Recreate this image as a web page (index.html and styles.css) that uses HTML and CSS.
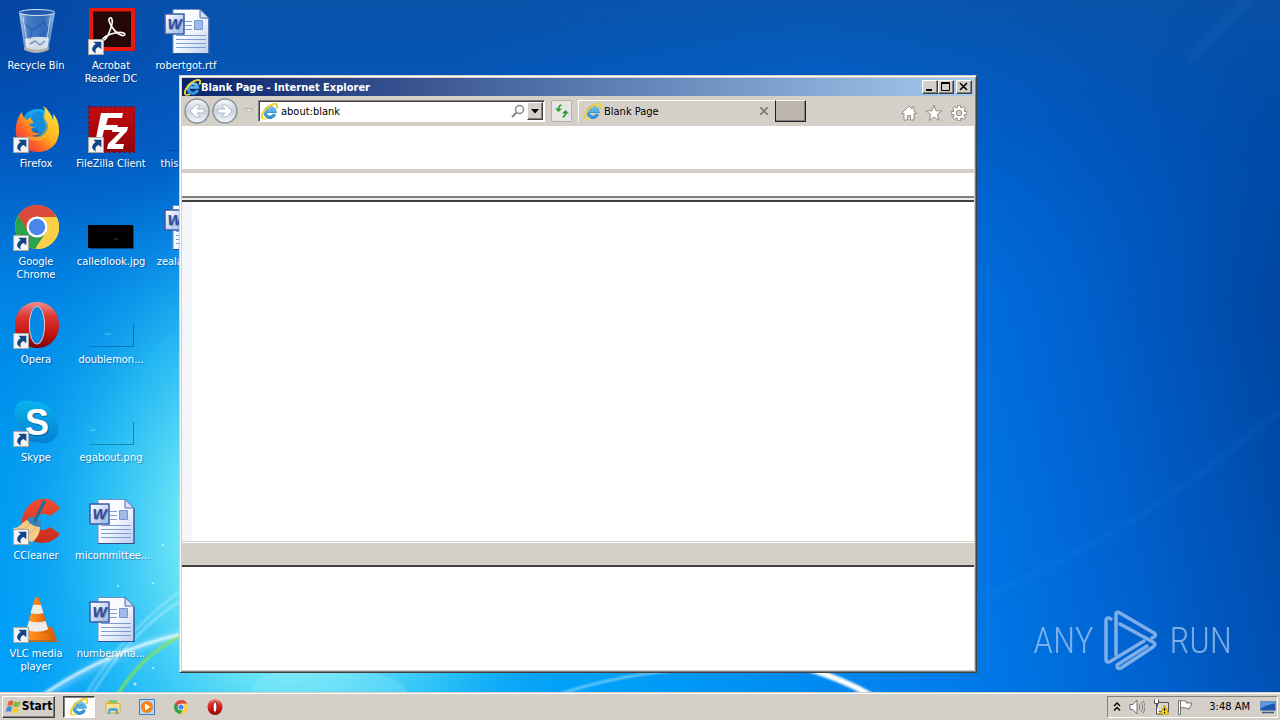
FILE: index.html
```html
<!DOCTYPE html>
<html lang="en">
<head>
<meta charset="utf-8">
<title>Desktop</title>
<link rel="stylesheet" href="styles.css">
</head>
<body>
<svg class="defs" aria-hidden="true">
  <defs>
    <linearGradient id="g-page" x1="0" y1="0" x2="1" y2="1"><stop offset="0" stop-color="#fff"/><stop offset=".5" stop-color="#f6f9ff"/><stop offset="1" stop-color="#b9cdf0"/></linearGradient>
    <linearGradient id="g-badge" x1="0" y1="0" x2="1" y2="1"><stop offset="0" stop-color="#fff"/><stop offset="1" stop-color="#9cb6e6"/></linearGradient>
    <linearGradient id="g-opera" x1="0" y1="0" x2="0" y2="1"><stop offset="0" stop-color="#f3908c"/><stop offset=".3" stop-color="#dd3a34"/><stop offset=".7" stop-color="#c4120f"/><stop offset="1" stop-color="#7c0605"/></linearGradient>
    <linearGradient id="g-fox" x1="1" y1="0" x2="0" y2="1"><stop offset="0" stop-color="#fff04a"/><stop offset=".45" stop-color="#ffb01c"/><stop offset=".7" stop-color="#ff5a2a"/><stop offset="1" stop-color="#f0205a"/></linearGradient>
    <linearGradient id="g-globe" x1="0" y1="0" x2="0" y2="1"><stop offset="0" stop-color="#12b4f4"/><stop offset="1" stop-color="#1450a8"/></linearGradient>
    <linearGradient id="g-fz" x1="0" y1="0" x2="0" y2="1"><stop offset="0" stop-color="#c40c10"/><stop offset="1" stop-color="#920408"/></linearGradient>
    <linearGradient id="g-skype" x1="0" y1="0" x2="0" y2="1"><stop offset="0" stop-color="#08b4f0"/><stop offset="1" stop-color="#067ed0"/></linearGradient>
    <linearGradient id="g-cc" x1="0" y1="0" x2="0" y2="1"><stop offset="0" stop-color="#f04c34"/><stop offset="1" stop-color="#c82c1c"/></linearGradient>
    <linearGradient id="g-bin" x1="0" y1="0" x2="1" y2="0"><stop offset="0" stop-color="#d8e8f8" stop-opacity=".85"/><stop offset=".25" stop-color="#7fa6dc" stop-opacity=".55"/><stop offset=".7" stop-color="#5a8cd0" stop-opacity=".5"/><stop offset="1" stop-color="#c4daf0" stop-opacity=".8"/></linearGradient>
    <linearGradient id="g-cone" x1="0" y1="0" x2="1" y2="0"><stop offset="0" stop-color="#ffa030"/><stop offset=".5" stop-color="#fb8010"/><stop offset="1" stop-color="#d05a04"/></linearGradient>
    <linearGradient id="g-nav" x1="0" y1="0" x2="0" y2="1"><stop offset="0" stop-color="#f8fafc"/><stop offset=".5" stop-color="#c8d0da"/><stop offset="1" stop-color="#f4fcff"/></linearGradient>
    <linearGradient id="g-e" x1="0" y1="0" x2="0" y2="1"><stop offset="0" stop-color="#6cc8f4"/><stop offset="1" stop-color="#2c94d8"/></linearGradient>

    <symbol id="link-arrow" viewBox="0 0 15 15"><path d="M.5.5h14v14H.5z" fill="#f4f4f2" stroke="#a8a8a4"/><path d="M5 2.500h7.500v7L10 7.500C7 8.500 6.500 10.500 7.500 13.500 3 11.500 2.500 8 7.200 4.700z" fill="#124488"/></symbol>

    <symbol id="ie" viewBox="0 0 16 16">
      <path d="M12.800 10.500A4.600 4.600 0 1 1 13 7.900H5" fill="none" stroke="#2a7cbc" stroke-width="3"/>
      <path d="M12.800 10.500A4.600 4.600 0 1 1 13 7.900H5" fill="none" stroke="url(#g-e)" stroke-width="2.200"/>
      <path d="M1.600 14.800C-.6 12.600 2.600 6.600 7 3.500 10.500 1 14 .2 15 1.600c.6 1 .2 2.300-.5 3.600" fill="none" stroke="#d0a41c" stroke-width="1.700"/>
      <path d="M1.600 14.800C-.6 12.600 2.600 6.600 7 3.500 10.500 1 14 .2 15 1.600c.6 1 .2 2.300-.5 3.600M1.600 14.800c1 .7 2.800 0 4.200-.8" fill="none" stroke="#f8dc3c" stroke-width="1.300"/>
    </symbol>

    <symbol id="word" viewBox="0 0 48 48">
      <path d="M11 1.500h27l9 8.500v35.500H11z" fill="url(#g-page)" stroke="#6f8fc8"/>
      <path d="M47 10.500V45.500H11" fill="none" stroke="#2d4f90" stroke-width="1.200"/>
      <path d="M38 1.500V10h9z" fill="#d6e2f8" stroke="#4a6cac"/>
      <path d="M23 13.500h7M23 17.500h7M23 21.500h7M14 27.500h30M14 31.500h30M14 35.500h30M14 39.500h30" stroke="#7f9cd2"/>
      <path d="M32.500 12.500h8v9h-8z" fill="#9db9ea" stroke="#7896d0"/>
      <path d="M3 6h19v20H3z" fill="url(#g-badge)" stroke="#3a5aa8" stroke-width="1.500"/>
      <text x="12.500" y="21" text-anchor="middle" class="glyph-w">W</text>
    </symbol>

    <symbol id="chrome" viewBox="0 0 44 44">
      <circle cx="22" cy="22" r="22" fill="#fbd04b"/>
      <path d="M22 22 3 11A22 22 0 0 0 20 43.900L31 27z" fill="#2ba24c"/>
      <path d="M22 12h19.600A22 22 0 0 0 3.200 10.500L13 27z" fill="#dc4a3c"/>
      <path d="M31.500 27 21 44A22 22 0 0 0 41.700 12H22z" fill="#fbcf48"/>
      <circle cx="22" cy="22" r="10.500" fill="#fff"/><circle cx="22" cy="22" r="8.200" fill="#4a86ec"/>
    </symbol>

    <symbol id="opera" viewBox="0 0 44 46">
      <path fill-rule="evenodd" d="M22 0C35 0 44 10 44 23S35 46 22 46 0 36 0 23 9 0 22 0zM22 4.500c-5.500 0-7.500 7-7.500 18.500S16.500 42 22 42s7.500-7.500 7.500-19S27.500 4.500 22 4.500z" fill="url(#g-opera)"/>
      <ellipse cx="22" cy="23.200" rx="7.600" ry="19" fill="none" stroke="#f4c4bc"/>
    </symbol>
  </defs>
</svg>

<main class="desktop">
  <svg class="wallpaper" viewBox="0 0 1280 692" preserveAspectRatio="none" aria-hidden="true">
    <defs>
      <linearGradient id="w-base" x1="0" y1="0" x2="0" y2="1"><stop offset="0" stop-color="#0550b6"/><stop offset=".15" stop-color="#0460ca"/><stop offset=".4" stop-color="#0082e2"/><stop offset=".65" stop-color="#0098f0"/><stop offset="1" stop-color="#00a2fa"/></linearGradient>
      <linearGradient id="w-right" gradientUnits="userSpaceOnUse" x1="560" y1="560" x2="1330" y2="400"><stop offset="0" stop-color="#0078ec" stop-opacity="0"/><stop offset=".45" stop-color="#0078ea" stop-opacity=".9"/><stop offset=".7" stop-color="#0062d0"/><stop offset="1" stop-color="#00419a"/></linearGradient>
      <linearGradient id="w-top" x1="0" y1="0" x2="0" y2="1"><stop offset="0" stop-color="#0a52a8" stop-opacity=".9"/><stop offset=".5" stop-color="#0054b8" stop-opacity=".45"/><stop offset="1" stop-color="#0060c8" stop-opacity="0"/></linearGradient>
      <radialGradient id="w-glow" gradientUnits="userSpaceOnUse" cx="0" cy="0" r="1" gradientTransform="translate(290 540) scale(320 400)"><stop offset="0" stop-color="#9cf8f0"/><stop offset=".35" stop-color="#70e8f6" stop-opacity=".95"/><stop offset=".62" stop-color="#34c8f6" stop-opacity=".7"/><stop offset="1" stop-color="#0090f0" stop-opacity="0"/></radialGradient>
      <radialGradient id="w-corner" gradientUnits="userSpaceOnUse" cx="0" cy="0" r="260"><stop offset="0" stop-color="#003a9c" stop-opacity=".6"/><stop offset="1" stop-color="#0050b8" stop-opacity="0"/></radialGradient>
      <filter id="soft"><feGaussianBlur stdDeviation="1"/></filter>
      <filter id="haze"><feGaussianBlur stdDeviation="3"/></filter>
    </defs>
    <path fill="url(#w-base)" d="M0 0h1280v692H0z"/>
    <path fill="url(#w-right)" d="M0 0h1280v692H0z"/>
    <path fill="url(#w-top)" d="M0 0h1280v300H0z"/>
    <path fill="url(#w-corner)" d="M0 0h300v300H0z"/>
    <path fill="url(#w-glow)" d="M0 0h1280v692H0z"/>
    <g fill="none" filter="url(#haze)" stroke="#fff">
      <path d="M40 700Q110 650 190 632" stroke-opacity=".4" stroke-width="5"/>
      <path d="M976 600Q1130 540 1280 410" stroke="#3aa0f4" stroke-opacity=".1" stroke-width="6"/>
      <path d="M1190 60 1250 0" stroke="#58b0f0" stroke-opacity=".15" stroke-width="4"/>
    </g>
    <g fill="none" filter="url(#soft)" stroke="#fff">
      <path d="M44 694Q110 650 182 634" stroke-opacity=".85" stroke-width="2.500"/>
      <path d="M86 694Q125 630 182 590M92 694Q132 630 182 600" stroke-opacity=".5" stroke-width="1.500"/>
      <path d="M118 694Q142 655 182 635" stroke="#8ee83c" stroke-width="2.500"/>
      <path d="M560 694Q610 677 670 671" stroke-opacity=".55" stroke-width="2"/>
      <path d="M806 668Q845 680 872 696" stroke-width="6"/>
    </g>
    <path d="M248 692q12-20 38-20h84q30 6 38 20z" fill="#a0ecff" fill-opacity=".22"/>
    <g fill="#fff" fill-opacity=".7"><circle cx="118" cy="586" r="1"/><circle cx="153" cy="583" r="1"/><circle cx="135" cy="684" r="1.500"/><circle cx="163" cy="545" r="1"/><circle cx="153" cy="668" r="1"/></g>
  </svg>

  <ul class="icons">
    <li class="icon"><svg viewBox="0 0 48 48"><path d="M7 4.500 12.500 42q12 6 24 0L43 4.500q-18 5-36 0z" fill="url(#g-bin)"/><path d="M13 31q12-4 24-1l-1.500 11q-11 5-21.500 0z" fill="#f2f2ee" fill-opacity=".85"/><path d="M12.500 42q12 6 24 0l.6-3q-12 5-25 0z" fill="#b2b4ac"/><path d="m18 36 5-3 5 4 5-4M12 14l8 8 12-8 4 8-9 7M20 22l-2 9" fill="none" stroke="#1c50a8" stroke-opacity=".5" stroke-width="1.500"/><ellipse cx="25" cy="4.500" rx="18" ry="3" fill="#2f66b4" fill-opacity=".6" stroke="#d4e2f0"/><path d="m11 9 4.500 29M38.500 9 35 32" stroke="#fff" stroke-opacity=".6"/></svg><span>Recycle Bin</span></li>
    <li class="icon"><svg viewBox="0 0 48 48"><path d="M2 0h46v43H2z" fill="#e8190c"/><path d="M6 3.500h38V39H6z" fill="#260708"/><path d="M22 11c2-3 4 0 3 5-2 8-6 17-9 16-2-1 5-6 12-7 7-1.500 11 0 9.500 2-2 2-9-2-12.500-8-2.500-4-3.500-6.500-3-8z" fill="none" stroke="#fff" stroke-width="1.600"/><use href="#link-arrow" x="1" y="31" width="16" height="16"/></svg><span>Acrobat Reader DC</span></li>
    <li class="icon"><svg viewBox="0 0 48 48"><use href="#word"/></svg><span>robertgot.rtf</span></li>

    <li class="icon"><svg viewBox="0 0 48 48"><circle cx="26" cy="20" r="17" fill="url(#g-globe)"/><path d="M31 0c3 4 2 8 1 12 4 4 5 8 3 13-3 6-10 8-15 4 4 1 6 0 8-2-5 1-8-1-9-4 3-2 6 0 8-3-1-2-4-2-6-4 0-2 1-4 2-5-4 0-6 1-8 3C12 12 10 9 10 6c-3 3-5 8-6 14C2 35 12 46 26 46c13 0 21-9 21-21 0-8-2-13-6-17 0 3 1 4 0 6-2-6-5-11-10-14z" fill="url(#g-fox)"/><path d="M31 5c4 5 7 10 7 17-1 8-7 13-15 13-4 0-8-3-9-6 5 3 10 3 14 0 6-4 7-11 2-16 2-2 2-5 1-8z" fill="#ffd02c" fill-opacity=".45"/><path d="M20 8c4-3 8-3 11-1-1 6 3 8 3 14-1 4-4 6-7 6 0-6-9-5-10-9 3-1 5-1 6-2-2-1-3-1-4-3z" fill="#148ce0"/><use href="#link-arrow" x="1" y="31" width="16" height="16"/></svg><span>Firefox</span></li>
    <li class="icon"><svg viewBox="0 0 48 48"><path d="M2 1h46v45H2z" fill="url(#g-fz)" stroke="#7c1428" stroke-width="2" stroke-dasharray="3 2"/><path d="M14 7h22l-1 5H21l-2 7h12l-2 5H17l-3 13H8l5-25z" fill="#fff"/><path d="M26 21h15l-1 4-12 13h9l-1 5H20l1-5 12-12h-8z" fill="#fff"/><use href="#link-arrow" x="1" y="31" width="16" height="16"/></svg><span>FileZilla Client</span></li>
    <li class="icon"><svg viewBox="0 0 48 48"><path d="M4 44.500h42M46.500 22v23" stroke="#07439a" fill="none"/></svg><span>thiscar.jpg</span></li>

    <li class="icon"><svg viewBox="0 0 48 48"><use href="#chrome" x="3" y="1" width="44" height="44"/><use href="#link-arrow" x="1" y="31" width="16" height="16"/></svg><span>Google Chrome</span></li>
    <li class="icon"><svg viewBox="0 0 48 48"><path d="M1 21h45v23H1z"/><path d="M46.500 22v22.500H3" fill="none" stroke="#0a4788"/><path d="M27 35h4" stroke="#345"/></svg><span>calledlook.jpg</span></li>
    <li class="icon"><svg viewBox="0 0 48 48"><use href="#word"/></svg><span>zealands.rtf</span></li>

    <li class="icon"><svg viewBox="0 0 48 48"><use href="#opera" x="3" y="0" width="44" height="46"/><use href="#link-arrow" x="1" y="31" width="16" height="16"/></svg><span>Opera</span></li>
    <li class="icon"><svg viewBox="0 0 48 48"><path d="M3 44.500h43.500V22" fill="none" stroke="#0876b4"/><path d="M18 32h6" stroke="#4cc8ee"/></svg><span>doublemon...</span></li>

    <li class="icon"><svg viewBox="0 0 48 48"><path d="M6 3C12-1 20 1 24 2c10 0 20 8 20 19 4 6 3 14-3 19-5 4-11 4-15 2C15 43 6 35 5 24 2 17 1 8 6 3z" fill="url(#g-skype)"/><text x="25" y="35" text-anchor="middle" class="glyph-s">S</text><use href="#link-arrow" x="1" y="31" width="16" height="16"/></svg><span>Skype</span></li>
    <li class="icon"><svg viewBox="0 0 48 48"><path d="M3 44.500h43.500V22" fill="none" stroke="#0c8ca8"/><path d="M3 30h6" stroke="#5cd8f2"/></svg><span>egabout.png</span></li>

    <li class="icon"><svg viewBox="0 0 48 48"><path d="M48 11 38 18c-8-5-16 0-16 6 0 7 9 11 16 5l10 7c-7 9-18 11-27 7C11 39 8 31 10 21 13 7 24-1 35 1c6 1 10 5 13 10z" fill="url(#g-cc)"/><path d="M1 30c8 0 9-7 16-9l11 8c0 6-3 12-8 15-8-2-15-7-19-14z" fill="#f6cc88"/><path d="M5 31c8 1 11-3 14-7M11 38c6-1 10-5 13-10" stroke="#dca860" fill="none"/><path d="M15 22c2-5 9-4 14 2v5c-6 0-10-2-14-7z" fill="#3c84b4"/><path d="M32 4 23 23" stroke="#1c6ca0" stroke-width="3" stroke-linecap="round"/><use href="#link-arrow" x="1" y="31" width="16" height="16"/></svg><span>CCleaner</span></li>
    <li class="icon"><svg viewBox="0 0 48 48"><use href="#word"/></svg><span>micommittee...</span></li>

    <li class="icon"><svg viewBox="0 0 48 48"><path d="M13 31h27l5 13.500H9z" fill="url(#g-cone)"/><path d="M9 44.500h36V46H9z" fill="#c86008"/><path d="M23 2q2-2 4 0l10 34q-12 6-23 0z" fill="url(#g-cone)"/><path d="m21 9 8-.2L31.500 17q-6.500 2-13 0zM17 25q8 2.500 16.500 0l2.700 8.500Q25 38 14.500 33.500z" fill="#ececea"/><use href="#link-arrow" x="1" y="31" width="16" height="16"/></svg><span>VLC media player</span></li>
    <li class="icon"><svg viewBox="0 0 48 48"><use href="#word"/></svg><span>numberwha...</span></li>
  </ul>

  <section class="window" aria-label="Blank Page - Internet Explorer">
    <header class="titlebar">
      <svg class="ie-16"><use href="#ie"/></svg>
      <h1>Blank Page - Internet Explorer</h1>
      <div class="controls">
        <button type="button" aria-label="Minimize"><svg viewBox="0 0 12 10"><path d="M2 8h6" stroke="#000" stroke-width="2"/></svg></button>
        <button type="button" aria-label="Maximize"><svg viewBox="0 0 12 10"><path d="M1.500.5h8v8h-8zM1 1.500h9" fill="none" stroke="#000"/></svg></button>
        <button type="button" class="close" aria-label="Close"><svg viewBox="0 0 12 10"><path d="m2 1 7 7M9 1 2 8" stroke="#000" stroke-width="1.600"/></svg></button>
      </div>
    </header>

    <nav class="navbar">
      <div class="history">
        <button type="button" aria-label="Back"><svg viewBox="0 0 26 26"><circle cx="13" cy="13" r="12" fill="url(#g-nav)" stroke="#8a929a" stroke-width="1.500"/><path d="M20 11h-7l3.500-4H12l-6 6 6 6h4.500L13 15h7z" fill="#fff" stroke="#b4bcc8"/></svg></button>
        <button type="button" aria-label="Forward"><svg viewBox="0 0 26 26"><circle cx="13" cy="13" r="12" fill="url(#g-nav)" stroke="#8a929a" stroke-width="1.500"/><path d="M6 11h7L9.500 7H14l6 6-6 6H9.500l3.500-4H6z" fill="#fff" stroke="#b4bcc8"/></svg></button>
        <button type="button" class="recent" aria-label="Recent pages"><svg viewBox="0 0 10 6"><path d="M1 .5h8l-4 4z" fill="#e8e4e0" stroke="#b0aca6"/></svg></button>
      </div>
      <form class="address">
        <svg class="ie-16"><use href="#ie"/></svg>
        <input type="text" value="about:blank" aria-label="Address">
        <button type="button" class="search" aria-label="Search"><svg viewBox="0 0 14 14"><circle cx="8.500" cy="5.500" r="4" fill="none" stroke="#868686" stroke-width="1.500"/><path d="M5.500 8.500 1 13" stroke="#868686" stroke-width="2"/></svg></button>
        <button type="button" class="drop" aria-label="Show address list"><svg viewBox="0 0 8 5"><path d="M0 0h8L4 4.500z"/></svg></button>
      </form>
      <button type="button" class="refresh" aria-label="Refresh"><svg viewBox="0 0 14 14"><g fill="none" stroke="#2e9a36" stroke-width="1.600"><path d="M6.500 1Q3.500 1.500 3.500 5.500M7.500 13q3-.5 3-4.500"/></g><path d="M0 4.500h7L3.500 8zM7 9.500h7L10.500 6z" fill="#2e9a36"/></svg></button>
      <div class="tab">
        <svg class="ie-16"><use href="#ie"/></svg>
        <span>Blank Page</span>
        <button type="button" aria-label="Close tab"><svg viewBox="0 0 8 8"><path d="m0 0 8 8M8 0 0 8" stroke="#807c78" stroke-width="1.800"/></svg></button>
      </div>
      <button type="button" class="new-tab" aria-label="New tab"></button>
      <div class="tools">
        <button type="button" aria-label="Home"><svg viewBox="0 0 18 18"><path d="M9 2 1.500 9.500H4V16h3.500v-4.500h3V16H14V9.500h2.500L14 7V3h-2v2z" fill="#fff" stroke="#928e88"/></svg></button>
        <button type="button" aria-label="Favorites"><svg viewBox="0 0 18 18"><path d="m9 1.200 2 5.600 6 .1-4.700 3.600 1.700 5.900L9 13l-5 3.400 1.700-5.900L1 6.900l6-.1z" fill="#fff" stroke="#928e88"/></svg></button>
        <button type="button" aria-label="Tools"><svg viewBox="0 0 18 18"><path d="M9 1v16M1 9h16M3.300 3.300l11.400 11.400M14.700 3.300 3.300 14.700" stroke="#928e88" stroke-width="4"/><circle cx="9" cy="9" r="6.300" fill="#928e88"/><path d="M9 1.800v14.400M1.800 9h14.400M3.900 3.900l10.200 10.200M14.100 3.900 3.900 14.100" stroke="#fff" stroke-width="2.200"/><circle cx="9" cy="9" r="5.400" fill="#fff"/><circle cx="9" cy="9" r="2.700" fill="#d4d0c8" stroke="#928e88"/></svg></button>
      </div>
    </nav>

    <div class="pane pane-top"></div>
    <div class="pane pane-bar"></div>
    <div class="rule"></div>
    <div class="pane pane-content"></div>
    <div class="status"></div>
    <div class="pane pane-bottom"></div>
  </section>

  <div class="watermark">
    <span>ANY</span>
    <svg viewBox="0 0 56 62" aria-hidden="true"><g fill="none" stroke="#a8c8f0" stroke-width="3.500" stroke-linejoin="round" stroke-linecap="round"><path d="M13 45V4q0-2.500 3-1.500L51 23q3 2 0 4L49 28"/><path d="M8 9Q3 6 3 11v38q0 5 5 2l33-20"/><path d="M17 14 50 32q4 2 0 5L18 58q-4 2-4-3l30-19"/></g></svg>
    <span>RUN</span>
  </div>
</main>

<footer class="taskbar">
  <button type="button" class="start"><svg viewBox="0 0 17 17"><path d="M3.500 3.500Q6 1.500 8.500 3.200L7.300 8Q5 6.500 2.300 8.200z" fill="#e8602c"/><path d="M9.500 3.600q2.500 1.500 6-.6L14.300 8q-3 2-6 .4z" fill="#78b83c"/><path d="M2 9.200Q4.500 7.500 7 9l-1.200 5Q3.500 12.500.8 14z" fill="#3c8cdc"/><path d="M8 9.500q3 1.500 6-.3l-1.200 5q-3 1.800-6 .2z" fill="#f8c830"/></svg>Start</button>
  <div class="launch">
    <button type="button" class="active" aria-label="Internet Explorer"><svg viewBox="0 0 16 16"><use href="#ie"/></svg></button>
    <button type="button" aria-label="Windows Explorer"><svg viewBox="0 0 16 16"><path d="M1 2h5l1 1.500h7V6H1z" fill="#f0c850"/><path d="M4 1h8v3H4z" fill="#78c878"/><path d="M1 4.500h14V14H1z" fill="#fae294" stroke="#d8b048"/><path d="M3 15v-4q0-2 2-2h6q2 0 2 2v4h-2.500v-3h-5v3z" fill="#58a8dc"/></svg></button>
    <button type="button" aria-label="Windows Media Player"><svg viewBox="0 0 16 16"><path d="M.5.5h15v15H.5z" fill="#b8d8f4" stroke="#3c80cc"/><circle cx="8" cy="8" r="6" fill="#f48418"/><path d="m6 4.500 5.500 3.500L6 11.500z" fill="#fff"/></svg></button>
    <button type="button" aria-label="Google Chrome"><svg viewBox="0 0 16 16"><use href="#chrome" x="1" y="1" width="14" height="14"/></svg></button>
    <button type="button" aria-label="Opera"><svg viewBox="0 0 16 16"><ellipse cx="8" cy="8" rx="7.500" ry="8" fill="url(#g-opera)"/><ellipse cx="8" cy="8" rx="2" ry="5.500" fill="#fff" stroke="#8c0c0c"/></svg></button>
  </div>
  <div class="tray">
    <button type="button" class="t-more" aria-label="Show hidden icons"><svg viewBox="0 0 8 10"><path d="m1 4 3-3 3 3M1 8.500l3-3 3 3" fill="none" stroke="#000" stroke-width="1.400"/></svg></button>
    <button type="button" aria-label="Volume"><svg viewBox="0 0 16 16"><path d="M1 5.500h3L8 1v14l-4-4.500H1z" fill="#fff" stroke="#707070"/><path d="M10 5q2 3 0 6M12 3q3.500 5 0 10M14 1.500q4 6.500 0 13" fill="none" stroke="#808080"/></svg></button>
    <button type="button" aria-label="Network"><svg viewBox="0 0 16 16"><path d="M4.500 3.500h11v9h-11z" fill="#d8d8d8" stroke="#505050"/><path d="M1.500.5v4h4v-4M3.500 4.500V15h3M6 15h4" fill="#fff" stroke="#505050"/><path d="m11.500 6 4.300 9H7z" fill="#fcd820" stroke="#c09808"/><path d="M11.500 9v3M11.500 13v1" stroke="#000" stroke-width="1.200"/></svg></button>
    <button type="button" aria-label="Action Center"><svg viewBox="0 0 16 16"><path d="M1.500 15.500V1.500h2v14zM3.500 2q3-1 6 .5V4h5.500q-1 3-3 6-3-1-4-1-2-1-4.500 0z" fill="#fff" stroke="#707070"/></svg></button>
    <time>3:48 AM</time>
    <button type="button" aria-label="Show desktop"><svg viewBox="0 0 16 16"><path d="M.5 2.500h15v9H.5z" fill="#1c58b0" stroke="#6c8cc0"/><path d="M1 3h14v1.500Q8 5 1 9z" fill="#5c98e4"/><path d="M2 13.500h12" stroke="#405880" stroke-width="1.500"/></svg></button>
  </div>
</footer>
</body>
</html>
```
FILE: styles.css
```css
* { box-sizing: border-box; }

body {
  margin: 0;
  min-height: 100vh;
  display: flex;
  flex-direction: column;
  font: 11px/13px "DejaVu Sans Condensed", "DejaVu Sans", sans-serif;
  color: #000;
  overflow: hidden;
}

button {
  margin: 0;
  padding: 0;
  border: 0;
  background: none;
  font: inherit;
  color: inherit;
  display: flex;
  align-items: center;
  justify-content: center;
}

svg { display: block; flex: none; }

.defs { position: absolute; width: 0; height: 0; }

.desktop {
  position: relative;
  flex: 1;
  overflow: hidden;
  background: #0078e0;
}

.wallpaper {
  position: absolute;
  inset: 0;
  width: 100%;
  height: 100%;
}

.icons {
  position: absolute;
  inset: 0;
  margin: 0;
  padding: 0;
  list-style: none;
  display: grid;
  grid-template-columns: repeat(3, 72px);
  grid-auto-rows: 98px;
  column-gap: 3px;
}

.icon {
  display: flex;
  flex-direction: column;
  align-items: center;
  gap: 3px;
  padding-top: 8px;
  color: #fff;
  text-align: center;
  text-shadow: 1px 1px 1px rgba(0, 30, 80, 0.4);
}

.icon:nth-child(3n + 1) { grid-column: 1; }
.icon svg { width: 48px; height: 48px; }
.icon span { max-width: 72px; }
.icon:nth-child(n + 10):nth-child(even) { grid-column: 1; }
.icon:nth-child(n + 10):nth-child(odd) { grid-column: 2; }

.glyph-w { font: italic bold 15px "Liberation Sans", sans-serif; fill: #2a4ca4; }
.glyph-s { font: bold 36px "Liberation Sans", sans-serif; fill: #fff; }

.window {
  position: absolute;
  inset: 75px 303px 19px 179px;
  display: flex;
  flex-direction: column;
  padding: 1px;
  background: #d4d0c8;
  border: 1px solid;
  border-color: #d4d0c8 #404040 #404040 #d4d0c8;
  box-shadow: inset 1px 1px #fff, inset -1px -1px #808080;
}

.titlebar {
  display: flex;
  align-items: center;
  height: 18px;
  margin: 1px 1px 0;
  padding: 0 2px;
  background: linear-gradient(90deg, #0a246a, #a6caf0);
  color: #fff;
}

.titlebar h1 {
  flex: 1;
  margin: 0;
  font-size: 11px;
  font-weight: bold;
}

.ie-16 { width: 17px; height: 17px; }

.controls { display: flex; }

.controls button,
.drop {
  width: 16px;
  height: 14px;
  background: #d4d0c8;
  border: 1px solid;
  border-color: #fff #404040 #404040 #fff;
  box-shadow: inset -1px -1px #808080;
}

.controls svg { width: 12px; height: 10px; }
.controls .close { margin-left: 2px; }

.navbar {
  display: flex;
  align-items: center;
  height: 30px;
  margin: 0 1px;
  padding: 0 6px 0 2px;
}

.history { display: flex; align-items: center; gap: 2px; width: 74px; }
.history svg { width: 26px; height: 26px; }
.history .recent { margin-left: 4px; }
.history .recent svg { width: 10px; height: 6px; }

.address {
  display: flex;
  align-items: center;
  flex: 282;
  height: 22px;
  padding: 1px 1px 1px 2px;
  background: #fff;
  border: 1px solid;
  border-color: #808080 #fff #fff #808080;
  box-shadow: inset 1px 1px #404040;
}

.address input {
  flex: 1;
  min-width: 0;
  padding: 0 3px;
  border: 0;
  background: none;
  font: inherit;
  color: inherit;
  outline: 0;
}

.search { width: 18px; }
.search svg { width: 14px; height: 14px; }
.drop { height: 18px; }
.drop svg { width: 8px; height: 5px; }

.refresh {
  width: 21px;
  height: 22px;
  margin: 0 6px;
  background: #e8e6e2;
  border: 1px solid #b4b0aa;
  border-radius: 2px;
}

.refresh svg { width: 14px; height: 14px; }

.tab {
  display: flex;
  align-items: center;
  gap: 3px;
  flex: 184;
  height: 22px;
  padding: 0 6px 0 5px;
  border: 1px solid;
  border-color: #fff transparent transparent #fff;
}

.tab span { flex: 1; }
.tab svg:not(.ie-16) { width: 8px; height: 8px; }

.new-tab {
  width: 31px;
  height: 22px;
  background: #bcb5ac;
  border: 1px solid;
  border-color: #f4f2f0 #202020 #202020 #202020;
  box-shadow: inset -1px -1px #808080;
}

.tools {
  display: flex;
  justify-content: flex-end;
  gap: 7px;
  flex: 162;
  padding-top: 4px;
}

.tools svg { width: 18px; height: 18px; }

.pane { margin: 0 1px; background: #fff; }
.pane-top { height: 43px; }
.pane-bar { height: 23px; margin-top: 4px; }

.rule {
  height: 6px;
  margin: 0 1px;
  background: #f0eeea;
  border-top: 2px solid #808080;
  border-bottom: 2px solid #404040;
}

.pane-content {
  flex: 1;
  border-left: 10px solid #f5f6fa;
}

.status {
  height: 26px;
  margin: 0 1px;
  border-top: 1px solid #d4d0c8;
  border-bottom: 2px solid #404040;
  box-shadow: inset 0 1px #fff;
}

.pane-bottom { height: 103px; margin-bottom: 1px; }

.watermark {
  position: absolute;
  right: 48px;
  bottom: 20px;
  display: flex;
  align-items: center;
  gap: 10px;
  color: #a8c8f0;
  font: 300 36px/40px "Roboto Condensed", Roboto, sans-serif;
  opacity: 0.75;
}

.watermark svg { width: 56px; height: 62px; }

.taskbar {
  display: flex;
  align-items: center;
  height: 28px;
  padding: 2px 2px 2px;
  background: #d4d0c8;
  border-top: 1px solid #d4d0c8;
  box-shadow: inset 0 1px #fff;
}

.start {
  gap: 0;
  width: 53px;
  height: 22px;
  border: 1px solid;
  border-color: #fff #404040 #404040 #fff;
  box-shadow: inset -1px -1px #808080;
  font-size: 12px;
  font-weight: bold;
}

.start svg { width: 17px; height: 17px; }

.launch { display: flex; gap: 2px; margin-left: 8px; }
.launch button { width: 32px; height: 22px; border: 1px solid transparent; }
.launch svg { width: 16px; height: 16px; }

.launch .active {
  background: #fff;
  border-color: #404040 #fff #fff #404040;
  box-shadow: inset 1px 1px #808080;
}

.launch .active svg { width: 18px; height: 18px; }

.tray {
  display: flex;
  align-items: center;
  gap: 8px;
  height: 22px;
  margin-left: auto;
  padding: 0 1px 0 5px;
  border: 1px solid;
  border-color: #808080 #fff #fff #808080;
}

.tray svg { width: 16px; height: 16px; }
.tray .t-more svg { width: 8px; height: 10px; }
.tray time { margin: 0 2px 0 8px; }
```
